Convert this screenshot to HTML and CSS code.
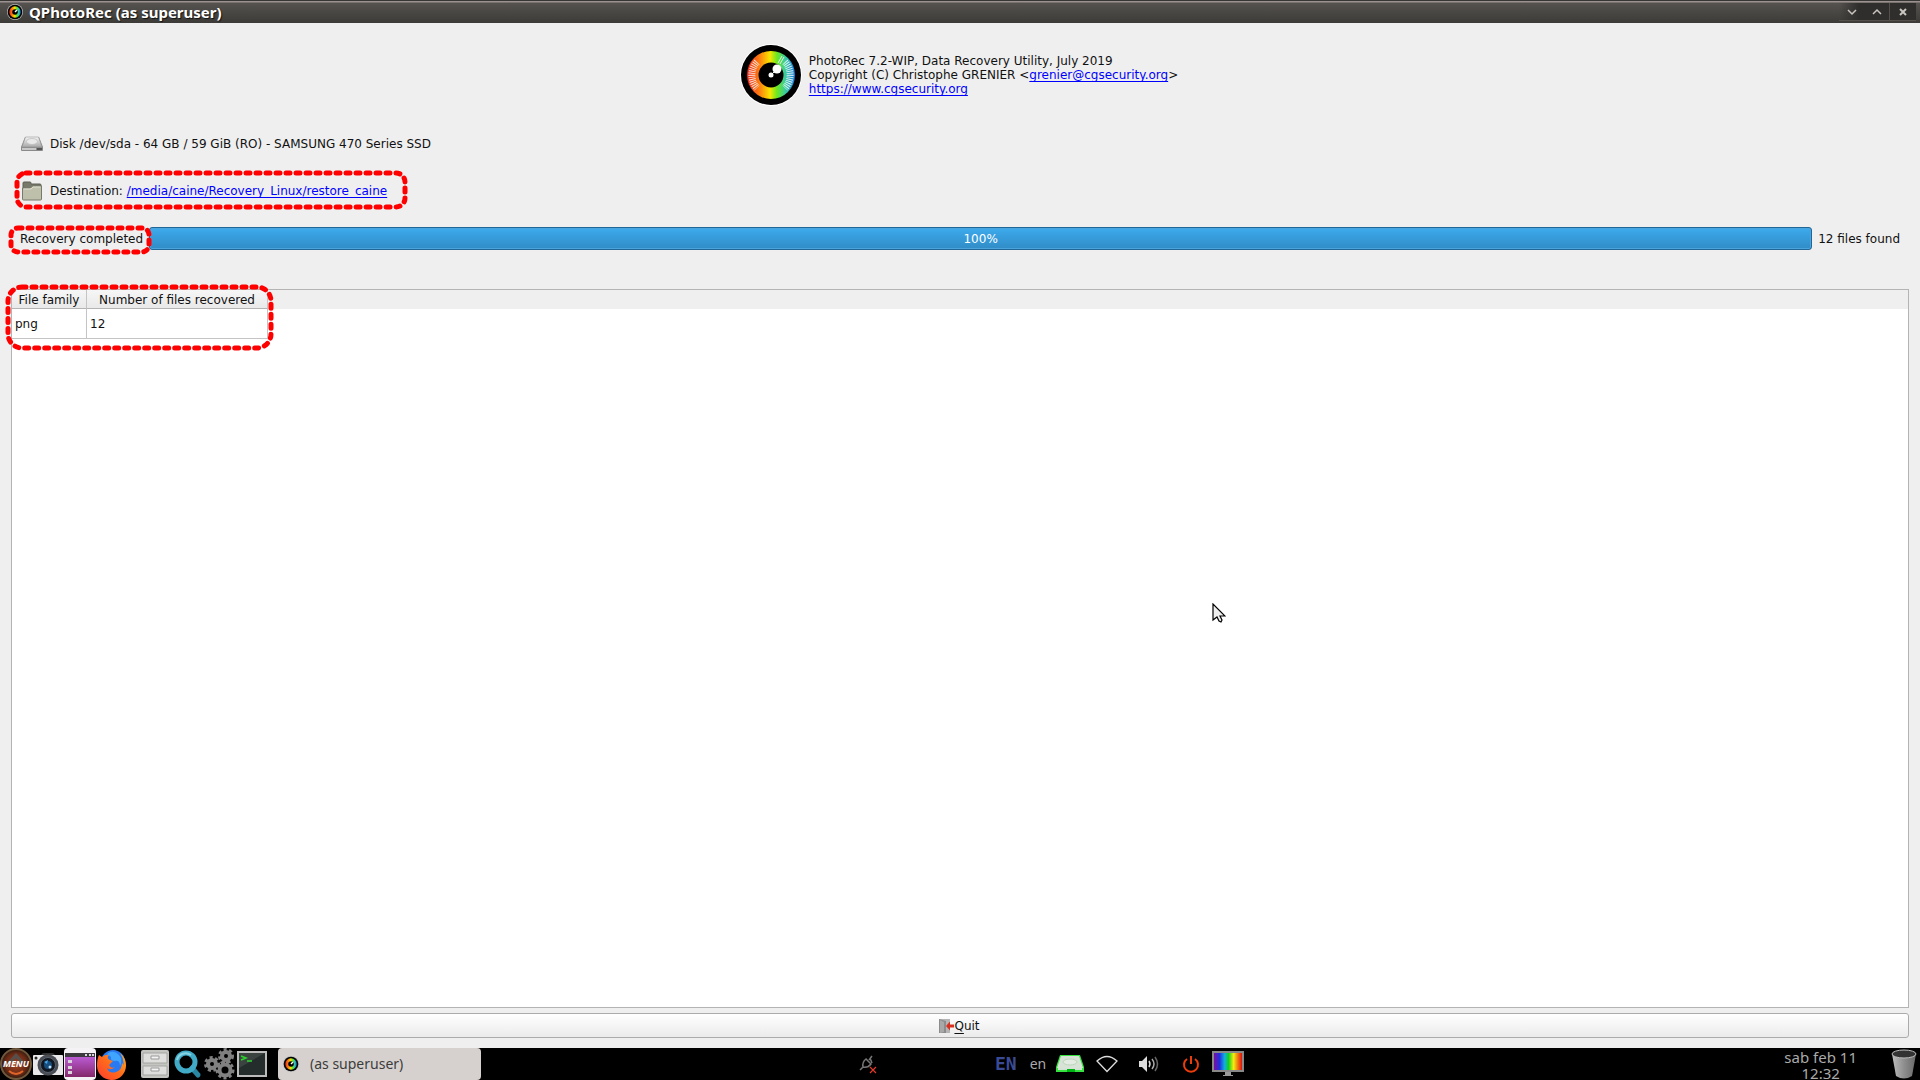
FILE: index.html
```html
<!DOCTYPE html>
<html lang="en">
<head>
<meta charset="utf-8">
<title>QPhotoRec (as superuser)</title>
<link rel="stylesheet" href="styles.css">
</head>
<body>
<svg class="defs" aria-hidden="true">
  <defs>
    <linearGradient id="iris" x1="0" x2="1" y1="0" y2="0">
      <stop offset="0" stop-color="#e8281e"/><stop offset=".25" stop-color="#ff7a10"/><stop offset=".48" stop-color="#f7e600"/><stop offset=".62" stop-color="#6ee81e"/><stop offset=".8" stop-color="#38cba0"/><stop offset="1" stop-color="#1c78e0"/>
    </linearGradient>
    <linearGradient id="metal" x1="0" x2="0" y1="0" y2="1"><stop offset="0" stop-color="#f4f4f4"/><stop offset="1" stop-color="#a9a9a9"/></linearGradient>
    <linearGradient id="purple" x1="0" x2="0" y1="0" y2="1"><stop offset="0" stop-color="#c565e8"/><stop offset="1" stop-color="#84286a"/></linearGradient>
    <linearGradient id="rainbow"><stop offset="0" stop-color="#7a10a0"/><stop offset=".2" stop-color="#2030e0"/><stop offset=".38" stop-color="#10b0e0"/><stop offset=".52" stop-color="#10d020"/><stop offset=".7" stop-color="#f4ee10"/><stop offset=".86" stop-color="#f07010"/><stop offset="1" stop-color="#e01010"/></linearGradient>
    <radialGradient id="copper"><stop offset="0" stop-color="#a34420"/><stop offset=".7" stop-color="#6b2a14"/><stop offset="1" stop-color="#2c1a12"/></radialGradient>
    <linearGradient id="fox" x1="1" x2="0" y1="0" y2="1"><stop offset="0" stop-color="#ffb01c"/><stop offset=".5" stop-color="#ff6a1c"/><stop offset="1" stop-color="#ff3a30"/></linearGradient>
    <linearGradient id="can"><stop offset="0" stop-color="#bdbdbd"/><stop offset=".5" stop-color="#8e8e8e"/><stop offset="1" stop-color="#686868"/></linearGradient>
    <symbol id="eye" viewBox="0 0 62 62">
      <circle cx="31" cy="31" r="31" fill="#fff"/>
      <circle cx="31" cy="31" r="30" fill="#000"/>
      <circle cx="31" cy="31" r="24" fill="url(#iris)"/>
      <path d="M17 18A19 19 0 0 0 17 44M45 18A19 19 0 0 1 45 44" fill="none" stroke="#fff" stroke-opacity=".8" stroke-width="7" stroke-dasharray="1 1"/>
      <path d="M38 19l4-7M40 20l4-7" stroke="#fff" stroke-opacity=".8"/>
      <circle cx="31" cy="31" r="12.500"/>
      <circle cx="37" cy="25" r="4.500" fill="#fff"/><circle cx="31" cy="31" r="2.500" fill="#fff"/>
      <path d="M31 31l6-6" stroke="#fff"/>
    </symbol>
    <symbol id="eye-small" viewBox="0 0 16 16">
      <circle cx="8" cy="8" r="8" fill="#bbb"/><circle cx="8" cy="8" r="7.300"/><circle cx="8" cy="8" r="5.700" fill="url(#iris)"/><circle cx="8" cy="8" r="2.800"/><path d="M8 8l2-2" stroke="#fff" stroke-width="1.500"/>
    </symbol>
  </defs>
</svg>

<header class="titlebar">
  <svg class="icon-16" viewBox="0 0 16 16"><use href="#eye-small"/></svg>
  <h1 class="title">QPhotoRec (as superuser)</h1>
  <div class="window-buttons">
    <button type="button" aria-label="Minimize"><svg viewBox="0 0 10 10"><path d="M1 3l4 4 4-4"/></svg></button>
    <button type="button" aria-label="Maximize"><svg viewBox="0 0 10 10"><path d="M1 7l4-4 4 4"/></svg></button>
    <button type="button" class="close" aria-label="Close"><svg viewBox="0 0 10 10"><path d="M2 2l6 6M8 2l-6 6"/></svg></button>
  </div>
</header>

<main class="window">
  <section class="about">
    <svg class="logo" viewBox="0 0 62 62"><use href="#eye"/></svg>
    <p>PhotoRec 7.2-WIP, Data Recovery Utility, July 2019<br>Copyright (C) Christophe GRENIER &lt;<a href="mailto:grenier@cgsecurity.org">grenier@cgsecurity.org</a>&gt;<br><a href="https://www.cgsecurity.org">https://www.cgsecurity.org</a></p>
  </section>

  <div class="info disk">
    <svg viewBox="0 0 22 20"><path d="M4 3h14l4 10v3q0 1-1 1H1q-1 0-1-1v-3z" fill="#8a8a8a"/><path d="M4.500 3h13L21 13H1z" fill="url(#metal)" stroke="#999" stroke-width=".6"/><ellipse cx="11" cy="7.500" rx="5.500" ry="3" fill="#e9e9e9" stroke="#bbb" stroke-width=".7"/><path d="M1 14h14v2H1z" fill="#c8c8c8"/><path d="M16 14h5v2h-5z" fill="#555"/></svg>
    <span>Disk /dev/sda - 64 GB / 59 GiB (RO) - SAMSUNG 470 Series SSD</span>
  </div>

  <div class="info destination">
    <svg viewBox="0 0 22 20"><path d="M2 9V2q0-1 1-1h6q1 0 1 1v1h9q1 0 1 1v5z" fill="#77796a" stroke="#5c5e50"/><path d="M1.500 7h8l2-2h9v13q0 1-1 1h-17q-1 0-1-1z" fill="#bfc0ab" stroke="#77796a"/><path d="M2.500 8H10l2-2h7.500" fill="none" stroke="#dfe0d0"/></svg>
    <span>Destination: <a href="#destination">/media/caine/Recovery_Linux/restore_caine</a></span>
    <svg class="mark mark-destination" viewBox="0 0 394 40"><rect x="3" y="3" width="388" height="34" rx="9"/></svg>
  </div>

  <div class="progress-row">
    <span class="status">Recovery completed<svg class="mark mark-status" viewBox="0 0 144 30"><rect x="3" y="3" width="138" height="24" rx="7"/></svg></span>
    <div class="progress" role="progressbar" aria-label="Recovery" aria-valuenow="100" aria-valuemin="0" aria-valuemax="100">100%</div>
    <span>12 files found</span>
  </div>

  <section class="results">
    <div class="header-fill">
      <table>
        <thead><tr><th class="family">File family</th><th class="count">Number of files recovered</th></tr></thead>
        <tbody><tr><td>png</td><td>12</td></tr></tbody>
      </table>
    </div>
    <svg class="mark mark-table" viewBox="0 0 270 68"><rect x="3" y="3" width="263" height="61" rx="14"/></svg>
  </section>

  <button type="button" class="quit">
    <svg viewBox="0 0 16 16"><path d="M1 1h11v14H1z" fill="#b5b5b5"/><path d="M1 1l7 2v12H1z" fill="#8c8c8c"/><path d="M2 2l4 2v10l-4 1z" fill="#a8a8a8"/><path d="M8 8l4-4.500V6.500h4v3h-4v3z" fill="#d83020"/></svg><span><u>Q</u>uit</span>
  </button>
</main>

<footer class="taskbar">
  <nav class="launchers" aria-label="Launchers">
    <button type="button" aria-label="Menu"><svg viewBox="0 0 32 32"><circle cx="16" cy="16" r="15" fill="url(#copper)" stroke="#70583c" stroke-width="2"/><path d="M7 15l9-10 9 10-3 1-6-6-6 6z" fill="#55504e"/><path d="M9 23q7 6 14 0" stroke="#df642a" stroke-width="2" fill="none"/><text x="16" y="19" text-anchor="middle" class="menu-text">MENU</text></svg></button>
    <button type="button" aria-label="Camera"><svg viewBox="0 0 32 32"><path d="M9 7q1-2 3-2h8q2 0 3 2z" fill="#333"/><rect x="1" y="7" width="30" height="20" rx="1" fill="#e8e8ea"/><circle cx="4" cy="10" r="1.500" fill="#222"/><circle cx="16" cy="17" r="10.500" fill="#4a4e54"/><circle cx="16" cy="17" r="7.500" fill="#121821" stroke="#59616b"/><circle cx="16" cy="17" r="4" fill="#164d7d"/><path d="M12 14l4-2-1 4z" fill="#44a5e5"/><circle cx="18" cy="19" r="1.500" fill="#bde0f4"/></svg></button>
    <button type="button" aria-label="Window list"><svg viewBox="0 0 32 32"><rect width="32" height="32" rx="4" fill="#f4f2f4"/><path d="M1 5h30v24H1z" fill="url(#purple)"/><path d="M1 5h30v4H1z" fill="#3d3a3f"/><path d="M21 6h2v2h-2zM25 6h2v2h-2zM28 6h2v2h-2zM4 12h4v3H4zM4 18h4v3H4zM4 23h4v3H4z" fill="#d9d3dc"/></svg></button>
    <button type="button" aria-label="Firefox"><svg viewBox="0 0 32 32"><circle cx="17" cy="14" r="12" fill="#2a79ef"/><path d="M3 7l3 2q4-3 7-2-3 3 1 5l3 1-4 4q2 4 6 2-4 4-8 1 2 6 9 4 6-2 6-9 2 2 1 4 2-7-3-14 6 5 6 12a14.500 14.500 0 0 1-29 1q0-7 2-11z" fill="url(#fox)"/><path d="M11 6q6-5 12 1 4 5 1 11 0-6-5-5-5 0-4-4z" fill="#40a5ff"/></svg></button>
    <button type="button" class="spaced" aria-label="Files"><svg viewBox="0 0 32 32"><rect x="2" y="2" width="28" height="28" rx="2" fill="#c4c4c1"/><path d="M4 5h24v10H4zM4 18h24v9H4z" fill="#dededc" stroke="#a4a4a2"/><path d="M12 8h8v3h-8zM12 20h8v3h-8z" fill="#f4f4f4" stroke="#999"/></svg></button>
    <button type="button" aria-label="Search"><svg viewBox="0 0 32 32"><path d="M21 20l6 7" stroke="#2987a2" stroke-width="5" stroke-linecap="round"/><circle cx="15" cy="14" r="9" fill="none" stroke="#41abc7" stroke-width="5"/><path d="M6 12a9 9 0 0 1 14-5" fill="none" stroke="#86d2e3" stroke-width="2"/></svg></button>
    <button type="button" aria-label="Settings"><svg viewBox="0 0 32 32" fill="none" stroke="#808080"><g stroke-width="4"><circle cx="9" cy="16" r="4"/><circle cx="23" cy="8" r="4"/><circle cx="22" cy="22" r="5.500"/></g><g stroke-width="3" stroke-dasharray="3 2.500"><circle cx="9" cy="16" r="6.500"/><circle cx="23" cy="8" r="6.500"/><circle cx="22" cy="22" r="8"/></g></svg></button>
    <button type="button" aria-label="Terminal"><svg viewBox="0 0 32 32"><rect x="3" y="4" width="28" height="24" fill="#252d2c" stroke="#bbb" stroke-width="2"/><path d="M4 5h26L4 20z" fill="#3a4340"/><path d="M6 8l5 2-5 2M12 13h5" fill="none" stroke="#2bd52b" stroke-width="1.500"/></svg></button>
  </nav>
  <button type="button" class="task"><svg class="icon-16" viewBox="0 0 16 16"><use href="#eye-small"/></svg><span>(as superuser)</span></button>
  <div class="tray">
    <svg class="plug" viewBox="0 0 18 20"><path d="M1 16l3-3M4 13q-1-5 3-8l5 5q-3 4-8 3M10 6l3-4M13 9l-2-5" fill="none" stroke="#777" stroke-width="1.500"/><path d="M11 13l6 6M17 13l-6 6" stroke="#e33a2b" stroke-width="1.200"/></svg>
    <span class="layout">EN</span>
    <span class="lang">en</span>
    <svg class="drive" viewBox="0 0 30 20"><path d="M5 1h20l4 12v5H1v-5z" fill="#35e23f"/><path d="M6 2h18l4 12H2z" fill="#d8e2d7"/><ellipse cx="15" cy="8" rx="7" ry="3" fill="#e4ebe3" stroke="#b9d9b9"/><path d="M3 14h24v2H3z" fill="#d3e3d3"/><path d="M12 15h8v3h-8z" fill="#00b414"/></svg>
    <svg class="wifi" viewBox="0 0 22 18"><path d="M1 6q10-9 20 0L11 16.500z" fill="none" stroke="#ddd" stroke-width="1.300"/></svg>
    <svg class="sound" viewBox="0 0 22 18"><path d="M1 6h3l5-5v16l-5-5H1z" fill="#ddd"/><g fill="none" stroke-width="1.500"><path d="M11 6q2 3 0 6" stroke="#ddd"/><path d="M14 4q4 5 0 10" stroke="#aaa"/><path d="M17 2q5 7 0 14" stroke="#666"/></g></svg>
    <svg class="power" viewBox="0 0 18 18"><path d="M5 4a7 7 0 1 0 8 0M9 1v8" fill="none" stroke="#ec3d0b" stroke-width="2"/></svg>
    <svg class="monitor" viewBox="0 0 32 26"><rect width="32" height="21" fill="#888"/><rect x="2" y="2" width="28" height="17" fill="url(#rainbow)"/><path d="M13 21h6v3h2v1H11v-1h2z" fill="#999"/></svg>
  </div>
  <time class="clock">sab feb 11<br>12:32</time>
  <button type="button" class="trash" aria-label="Trash"><svg viewBox="0 0 26 30"><path d="M1 5l4 22q8 5 16 0l4-22z" fill="url(#can)"/><ellipse cx="13" cy="5" rx="12" ry="4" fill="#333" stroke="#bcbcbc"/></svg></button>
</footer>

<svg class="cursor" viewBox="0 0 14 22" aria-hidden="true"><path d="M1 1v16l4-3 2 4 2 1 1-2-2-4h5z" fill="#eee" stroke="#000" stroke-width="1.200"/></svg>
</body>
</html>
```
FILE: styles.css
```css
* { box-sizing: border-box; }
body {
  margin: 0;
  height: 100vh;
  display: flex;
  flex-direction: column;
  overflow: hidden;
  background: #efefef;
  color: #111;
  font: 12px/14px "DejaVu Sans", sans-serif;
}
button { font: inherit; color: inherit; margin: 0; padding: 0; border: 0; background: none; }
svg { display: block; flex: none; }
p, h1 { margin: 0; }
a { color: #00f; text-decoration: underline; text-underline-offset: 2px; text-decoration-skip-ink: none; }
.defs { position: absolute; width: 0; height: 0; }
.icon-16 { width: 16px; height: 16px; }

.titlebar {
  height: 23px;
  display: flex;
  align-items: center;
  gap: 6px;
  padding: 0 4px 0 7px;
  background: linear-gradient(#383634 0, #383634 1px, #9b928f 1px, #9b928f 2px, #555250 3px, #3c3b37 100%);
}
.title { color: #fff; font: bold 15px/20px "Noto Sans", sans-serif; text-shadow: 1px 1px 1px #111; }
.window-buttons {
  display: flex;
  align-items: center;
  align-self: flex-end;
  margin: 0 0 2px auto;
  height: 18px;
  background: linear-gradient(to right, transparent, #302e2c 20px);
  border-bottom: 1px solid #55504c;
}
.window-buttons button { width: 25px; height: 17px; display: grid; place-items: center; }
.window-buttons .close { width: 27px; border-left: 1px solid #55504c; }
.window-buttons svg { width: 10px; height: 10px; fill: none; stroke: #c9c5c0; stroke-width: 1.5; }
.window-buttons .close svg { stroke-width: 2; }

.window { flex: 1; min-height: 0; display: flex; flex-direction: column; padding: 21px 11px 10px; }
.about { display: flex; justify-content: center; align-items: center; gap: 7px; height: 62px; padding-right: 2px; }
.logo { width: 62px; height: 62px; }
.info { position: relative; display: flex; align-items: center; gap: 7px; padding-left: 10px; height: 20px; }
.info > svg:first-child { width: 22px; height: 20px; }
.disk { margin-top: 28px; }
.destination { margin-top: 27px; }
.progress-row { display: flex; align-items: flex-start; gap: 6px; height: 24px; margin-top: 26px; padding: 0 9px; line-height: 24px; }
.status { position: relative; }
.progress {
  flex: 1;
  height: 23px;
  border: 1px solid #1f6699;
  border-radius: 3px;
  background: linear-gradient(#3daaed, #308cc6);
  box-shadow: inset 0 0 0 1px #4ba4dc;
  color: #fff;
  line-height: 22px;
  text-align: center;
}
.results { position: relative; flex: 1; margin-top: 38px; border: 1px solid #b4b4b4; background: #fff; }
.header-fill { background: linear-gradient(#efefef, #efefef) 0 0 / 100% 19px no-repeat; }
table { border-collapse: separate; border-spacing: 0; table-layout: fixed; width: 256px; }
th { height: 19px; padding: 2px 0 0; font-weight: normal; text-align: center; border-right: 1px solid #c4c4c4; border-bottom: 1px solid #b4b4b4; background: linear-gradient(#f6f6f6, #e9e9e9); }
td { height: 30px; padding: 0 3px; border-right: 1px solid #c4c4c4; border-bottom: 1px solid #c4c4c4; }
.family { width: 75px; }
.count { width: 181px; }
.quit {
  display: flex;
  align-items: center;
  justify-content: center;
  height: 25px;
  margin-top: 5px;
  padding-right: 2px;
  border: 1px solid #ababab;
  border-radius: 3px;
  background: linear-gradient(#fff, #ebebeb);
}
.quit svg { width: 16px; height: 16px; }
.quit u { text-underline-offset: 3px; text-decoration-skip-ink: none; }

.mark { position: absolute; fill: none; stroke: #f00; stroke-width: 5; stroke-linecap: round; stroke-dasharray: 4 6; pointer-events: none; z-index: 1; }
.mark-destination { left: 3px; top: -11px; width: 394px; height: 40px; }
.mark-status { left: -12px; top: -2px; width: 144px; height: 30px; }
.mark-table { left: -7px; top: -6px; width: 270px; height: 68px; }

.taskbar { height: 32px; flex: none; display: flex; align-items: center; overflow: hidden; background: #000; color: #aaa; font-family: "Noto Sans", sans-serif; }
.launchers { display: flex; }
.launchers button, .launchers svg { width: 32px; height: 32px; }
.launchers .spaced { margin-left: 11px; }
.menu-text { font: italic bold 9px "Noto Sans", sans-serif; fill: #fff; }
.task { display: flex; align-items: center; gap: 11px; width: 203px; height: 32px; margin-left: 11px; padding: 0 5px; border-radius: 4px; background: #d6d1ce; color: #3c3c3c; font-size: 14px; }
.tray { display: flex; align-items: center; margin-left: 378px; }
.plug { width: 18px; height: 20px; }
.layout { margin-left: 118px; color: #3b4a94; font: bold 18px/20px "DejaVu Sans Mono", monospace; }
.lang { margin-left: 13px; font-size: 14px; }
.drive { width: 30px; height: 20px; margin-left: 9px; }
.wifi { width: 22px; height: 18px; margin-left: 11px; }
.sound { width: 22px; height: 18px; margin-left: 20px; }
.power { width: 18px; height: 18px; margin-left: 22px; }
.monitor { width: 32px; height: 26px; margin-left: 12px; }
.clock { align-self: flex-start; margin-left: auto; font-size: 15px; line-height: 16px; padding-top: 1px; text-align: center; }
.trash { margin: 0 3px 0 34px; }
.trash svg { width: 26px; height: 30px; }
.cursor { position: absolute; left: 1212px; top: 603px; width: 14px; height: 22px; z-index: 2; }
```
